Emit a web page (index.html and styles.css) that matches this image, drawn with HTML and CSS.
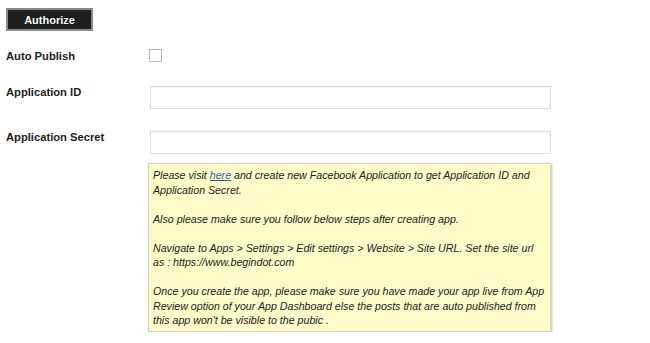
FILE: index.html
```html
<!DOCTYPE html>
<html>
<head>
<meta charset="utf-8">
<link rel="stylesheet" href="styles.css">
</head>
<body>
<div class="page">
  <button class="btn-authorize" type="button">Authorize</button>
  <div class="row row-check">
    <label class="label">Auto Publish</label>
    <input class="checkbox" type="checkbox">
  </div>
  <div class="row">
    <label class="label">Application ID</label>
    <input class="text-input" type="text">
  </div>
  <div class="row row-secret">
    <label class="label">Application Secret</label>
    <input class="text-input" type="text">
  </div>
  <div class="note">
    <p>Please visit <a href="#">here</a> and create new Facebook Application to get Application ID and Application Secret.</p>
    <p>Also please make sure you follow below steps after creating app.</p>
    <p>Navigate to Apps &gt; Settings &gt; Edit settings &gt; Website &gt; Site URL. Set the site url as : https://www.begindot.com</p>
    <p>Once you create the app, please make sure you have made your app live from App Review option of your App Dashboard else the posts that are auto published from this app won't be visible to the pubic .</p>
  </div>
</div>
</body>
</html>
```
FILE: styles.css
```css
* { box-sizing: border-box; }
html, body { margin: 0; padding: 0; background: #fff; }
body {
  font-family: "Liberation Sans", Arial, Helvetica, sans-serif;
  color: #222;
}
.page {
  padding: 8px 0 0 6px;
  display: flex;
  flex-direction: column;
  align-items: flex-start;
}
.btn-authorize {
  width: 87px;
  height: 23px;
  margin: 0;
  padding: 0;
  background: #1f1f1f;
  border: 2px solid #8a8a8a;
  border-radius: 0;
  color: #fff;
  font-family: "Liberation Sans", Arial, sans-serif;
  font-weight: bold;
  font-size: 11px;
  text-shadow: 0 0 1px #000;
}
.row {
  display: grid;
  grid-template-columns: 144px 401px;
  align-items: start;
  margin-top: 22px;
}
.row-check { margin-top: 18px; }
.row-secret { margin-top: 21px; }
.label {
  font-weight: bold;
  font-size: 11.2px;
  line-height: 14px;
  color: #222;
}
.checkbox {
  -webkit-appearance: none;
  appearance: none;
  width: 13px;
  height: 13px;
  margin: 0 0 0 -1px;
  border: 1px solid #b9b9b9;
  background: #fff;
  border-radius: 0;
}
.text-input {
  width: 401px;
  height: 23px;
  margin: 1px 0 0 0;
  border: 1px solid #dedede;
  background: #fff;
  border-radius: 0;
  box-shadow: inset 0 1px 1px rgba(0,0,0,0.04);
}
.note {
  margin: 9px 0 0 142px;
  width: 403px;
  padding: 4px 4px 3px 4px;
  background: #fffcc9;
  border: 1px solid #d4d2b0;
  box-shadow: 1px 1px 2px rgba(0,0,0,0.25);
  font-style: italic;
  font-size: 10.65px;
  line-height: 14.5px;
  color: #222;
}
.note p { margin: 0 0 14.5px 0; }
.note p:last-child { margin-bottom: 0; }
.note a { color: #2a5db0; text-decoration: underline; }
```
